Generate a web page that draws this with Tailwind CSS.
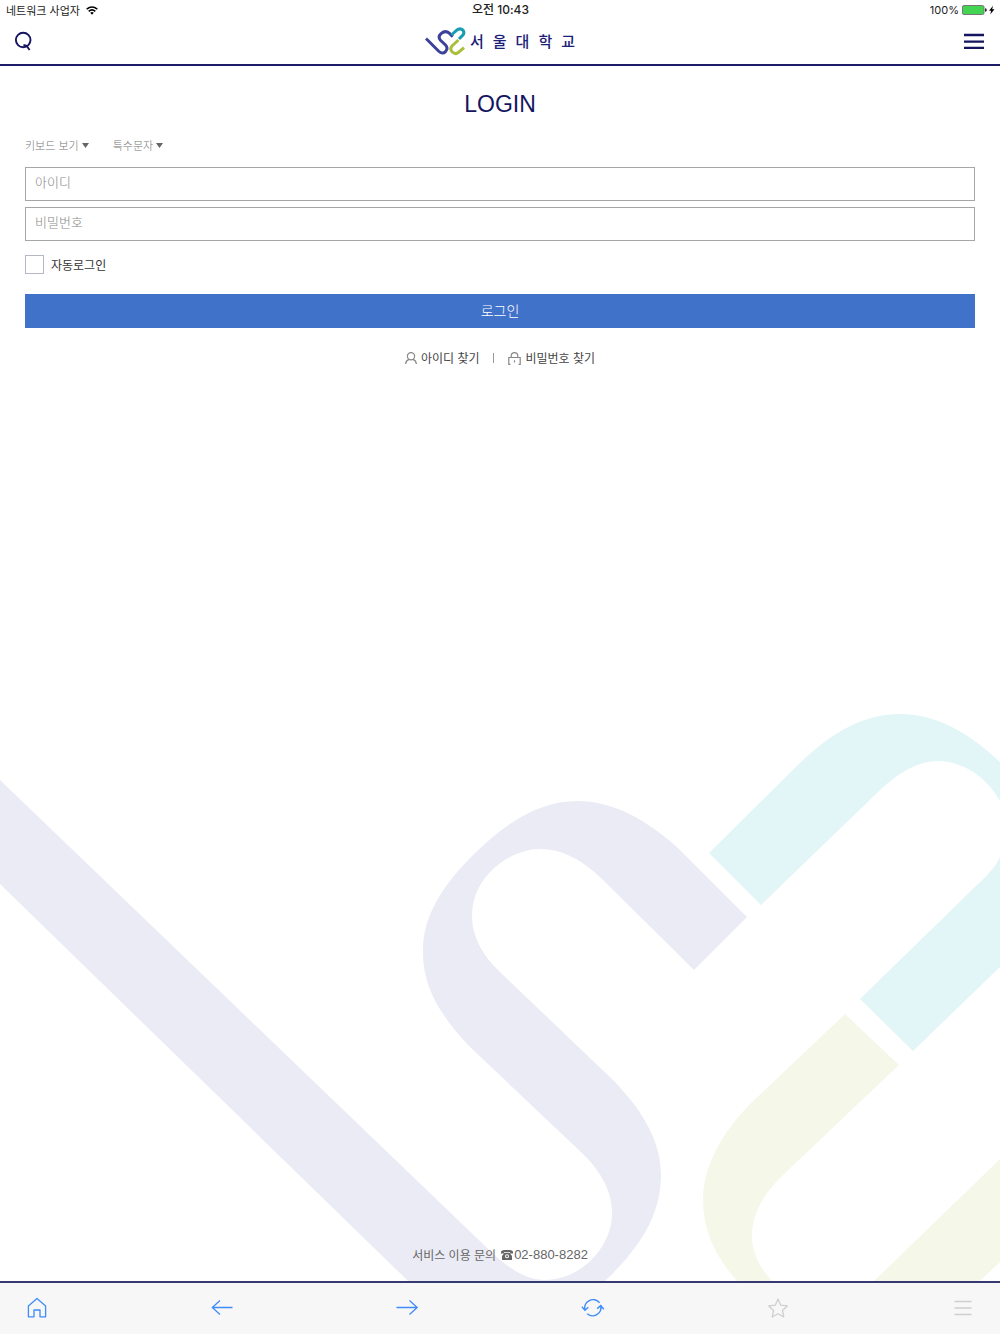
<!DOCTYPE html>
<html lang="ko">
<head>
    <meta charset="UTF-8">
    <meta name="viewport" content="width=device-width, initial-scale=1.0">
    <title>서울대학교 - LOGIN</title>
    <script src="https://cdn.jsdelivr.net/npm/@tailwindcss/browser@4"></script>
</head>
<body class="min-h-screen flex flex-col bg-white font-['Noto_Sans_CJK_KR',sans-serif] text-xs text-[#444]">

    <!-- Status bar -->
    <div class="grid grid-cols-3 items-center h-5 pl-[6px] pr-[5px] text-[11px] leading-4 text-[#222]">
        <div class="flex items-center gap-[6px]">
            <span>네트워크 사업자</span>
            <svg class="w-3 h-[9px]" viewBox="0 0 12 9" fill="none" stroke="#000" stroke-width="1.6">
                <path d="M0.7 3.2Q6-1.2 11.3 3.2"/>
                <path d="M2.7 5.3Q6 2.6 9.3 5.3"/>
                <path d="M4.2 6.8Q6 5.4 7.8 6.8L6 8.8Z" fill="#000" stroke="none"/>
            </svg>
        </div>
        <div class="text-center text-xs leading-4 font-medium font-[Inter,'Noto_Sans_CJK_KR',sans-serif]">오전 10:43</div>
        <div class="flex items-center justify-end gap-[3px]">
            <span class="font-[Inter,sans-serif]">100%</span>
            <svg class="w-[33px] h-[10px]" viewBox="0 0 33 10">
                <rect x="0.5" y="0.5" width="21.5" height="9" rx="1.5" fill="#43d551" stroke="#777"/>
                <path d="M23 3.2q1.8.3 1.8 1.8t-1.8 1.8z" fill="#222"/>
                <path d="M31 .8L27 5.7h2.2L28.2 9.5 32.5 4.3h-2.3z" fill="#000"/>
            </svg>
        </div>
    </div>

    <!-- Header -->
    <header class="grid grid-cols-3 items-center h-[46px] pl-[14px] pr-4 pb-[2px] border-b-2 border-[#1d1c69] text-[#14145f]">
        <button type="button" aria-label="검색" class="w-5 h-5">
            <svg class="w-5 h-5" viewBox="0 0 20 20" fill="none" stroke="currentColor" stroke-width="1.9">
                <circle cx="9.2" cy="9" r="7.3"/>
                <path d="M9.5 14L12.6 14.8 15.6 19"/>
            </svg>
        </button>
        <a href="#" class="flex items-center justify-center gap-1 pl-[2px]">
            <svg class="w-[41px] h-[29px]" viewBox="0 0 41 29" fill="none" stroke-width="3">
                <path d="M1 11.5L13.5 24Q17.5 27.8 20.5 24.6Q23.5 21 20.5 18L15.5 13.3Q12.5 9.8 16 6.6Q20.5 2.8 24.2 6.2L27.8 9.6" stroke="#3c429b"/>
                <path d="M26.3 8L31.5 3.3Q35 .6 37.8 3Q40 6 37.6 8.4L34 12" stroke="#189db1"/>
                <path d="M33.4 13L27 19Q24.3 22 27.3 25Q30.5 28 33.5 25.4L39 20.6" stroke="#a9bf3b"/>
            </svg>
            <span class="flex gap-[9px] text-[15px] leading-5 font-medium text-[#1c2078]"><span>서</span><span>울</span><span>대</span><span>학</span><span>교</span></span>
        </a>
        <button type="button" aria-label="메뉴" class="justify-self-end w-5 h-4">
            <svg class="w-5 h-4" viewBox="0 0 20 16" fill="none" stroke="currentColor" stroke-width="2.4">
                <path d="M0 2H20M0 8.6H20M0 15H20"/>
            </svg>
        </button>
    </header>

    <!-- Main Content -->
    <main class="relative flex-1 flex flex-col px-[25px] pt-[22px] pb-[18px] overflow-hidden">
        <svg class="absolute bottom-0 left-0 w-full" viewBox="0 713 1000 568" aria-hidden="true">
            <path fill="#ebebf5" d="M0 780L484 1245C506 1267 525 1280 545 1280C579 1280 612 1249 612 1213C612 1192 602 1173 584 1155L469 1046C439 1014 422 985 423 950C423 918 440 888 473 855C508 820 542 801 577 801C612 801 645 818 679 849L747 917L694 970L599 876C578 857 559 849 541 849C522 849 504 858 490 872C478 885 472 899 472 916C472 936 482 955 500 972L614 1081C644 1112 661 1143 661 1175C661 1213 642 1246 605 1281H408L0 884Z"/>
            <path fill="#e2f5f7" d="M709 853L800 763C834 730 866 714 900 714C934 714 966 730 1000 762V801C986 776 962 761 938 761C918 761 899 772 878 792L761 905ZM1000 857C996 866 988 875 978 884L860 999L913 1051L1000 967Z"/>
            <path fill="#f5f8e9" d="M845 1014L899 1065L783 1175C762 1195 752 1216 752 1236C752 1251 759 1267 772 1281H737C714 1255 703 1229 703 1200C703 1168 720 1135 750 1104ZM1000 1159L874 1281H980L1000 1262Z"/>
        </svg>

        <h1 class="text-center text-[23px] leading-8 text-[#14145f] font-['Liberation_Sans',sans-serif]">LOGIN</h1>

        <form class="relative">
            <div class="flex gap-6 mt-[17px] text-[11px] leading-4 font-light text-[#777]">
                <button type="button" class="flex items-center gap-[3px]">키보드 보기
                    <svg class="w-[7px] h-[5px]" viewBox="0 0 7 5"><path d="M0 0H7L3.5 5Z" fill="#666"/></svg>
                </button>
                <button type="button" class="flex items-center gap-[3px]">특수문자
                    <svg class="w-[7px] h-[5px]" viewBox="0 0 7 5"><path d="M0 0H7L3.5 5Z" fill="#666"/></svg>
                </button>
            </div>
            <input type="text" aria-label="아이디" placeholder="아이디" class="block w-full h-[34px] mt-[14px] px-[9px] pb-[5px] border border-[#a6a6a6] bg-white text-[13px] font-light placeholder:text-[#888]">
            <input type="password" aria-label="비밀번호" placeholder="비밀번호" class="block w-full h-[34px] mt-[6px] px-[9px] pb-[5px] border border-[#a6a6a6] bg-white text-[13px] font-light placeholder:text-[#888]">
            <div class="flex items-center gap-[7px] mt-[14px] h-[19px]">
                <input type="checkbox" id="auto-login" class="appearance-none w-[19px] h-[19px] border border-[#b4b8c4] bg-white checked:bg-[#4172ca]">
                <label for="auto-login" class="text-[#333]">자동로그인</label>
            </div>
            <button type="submit" class="block w-full h-[34px] mt-5 pb-[2px] bg-[#4172ca] text-white text-sm font-light">로그인</button>
        </form>

        <div class="relative flex items-center justify-center mt-[22px] leading-4">
            <a href="#" class="flex items-center gap-1">
                <svg class="w-3 h-[13px]" viewBox="0 0 12 13" fill="none" stroke="#888" stroke-width="1.2">
                    <circle cx="6" cy="4.2" r="3.6"/>
                    <path d="M.6 12Q1 8.3 4 7.4M8 7.4Q11 8.3 11.4 12"/>
                </svg>
                아이디 찾기
            </a>
            <span class="w-px h-[10px] mx-[14px] bg-[#999]"></span>
            <a href="#" class="flex items-center gap-1">
                <svg class="w-[13px] h-[13px]" viewBox="0 0 13 13" fill="none" stroke="#888" stroke-width="1.2">
                    <path d="M3.2 5.5V3.8Q3.4.6 6.5.6T9.8 3.8V5.5M2.4 12.4H.8V5.5H12.2V12.4H10.6M6.5 8.2V10.4"/>
                </svg>
                비밀번호 찾기
            </a>
        </div>

        <p class="relative mt-auto flex items-center justify-center leading-4 text-[#666]">
            서비스 이용 문의
            <svg class="w-3 h-[10px] ml-[5px] mr-px" viewBox="0 0 12 10" fill="#666">
                <path d="M0 3.5V1.6Q1 0 3 0H9Q11 0 12 1.6V3.5H9V2H3V3.5Z"/>
                <path fill-rule="evenodd" d="M3.5 2.8H8.5L11 6V10H1V6ZM6 4.2A2 2 0 1 0 6 8.2A2 2 0 1 0 6 4.2Z"/>
                <circle cx="6" cy="6.2" r="1"/>
            </svg>
            <a href="tel:02-880-8282" class="text-[13px] font-['Liberation_Sans',sans-serif]">02-880-8282</a>
        </p>
    </main>

    <!-- Bottom toolbar -->
    <nav class="flex justify-between items-center h-[53px] px-[25px] pb-px border-t-2 border-[#353a70] bg-[#f7f7f7] text-[#3f8cfa]">
        <button type="button" aria-label="홈">
            <svg class="w-6 h-6" viewBox="0 0 24 24" fill="none" stroke="currentColor" stroke-width="1.3" stroke-linejoin="round">
                <path d="M3.4 10L12 2.5 20.6 10V20.8H15V14H9V20.8H3.4Z"/>
            </svg>
        </button>
        <button type="button" aria-label="뒤로">
            <svg class="w-6 h-6" viewBox="0 0 24 24" fill="none" stroke="currentColor" stroke-width="1.3">
                <path d="M22.5 11.5H2.3M10 4.5L2.3 11.5 10 18.5"/>
            </svg>
        </button>
        <button type="button" aria-label="앞으로">
            <svg class="w-6 h-6" viewBox="0 0 24 24" fill="none" stroke="currentColor" stroke-width="1.3">
                <path d="M1.5 11.5H22.2M14.5 4.5L22.2 11.5 14.5 18.5"/>
            </svg>
        </button>
        <button type="button" aria-label="새로고침">
            <svg class="w-6 h-6" viewBox="0 0 24 24" fill="none" stroke="currentColor" stroke-width="1.4">
                <path d="M3.9 14.2A8.4 8.4 0 0 1 18.6 6.8M.9 10.8L3.9 14.2 7.4 11.3"/>
                <path d="M19.8 9.8A8.4 8.4 0 0 1 6.2 17.8M16.2 12.6L19.8 9.6 22.8 13.2"/>
            </svg>
        </button>
        <button type="button" aria-label="즐겨찾기" class="text-[#cfcfcf]">
            <svg class="w-6 h-6" viewBox="0 0 24 24" fill="none" stroke="currentColor" stroke-width="1.3" stroke-linejoin="round">
                <path d="M12 3L14.7 9.2 21.3 9.9 16.4 14.4 17.8 21 12 17.8 6.2 21 7.6 14.4 2.7 9.9 9.3 9.2Z"/>
            </svg>
        </button>
        <button type="button" aria-label="더보기" class="text-[#cfcfcf]">
            <svg class="w-6 h-6" viewBox="0 0 24 24" fill="none" stroke="currentColor" stroke-width="1.4">
                <path d="M3.5 5.5H20.5M3.5 12H20.5M3.5 18.5H20.5"/>
            </svg>
        </button>
    </nav>

</body>
</html>
